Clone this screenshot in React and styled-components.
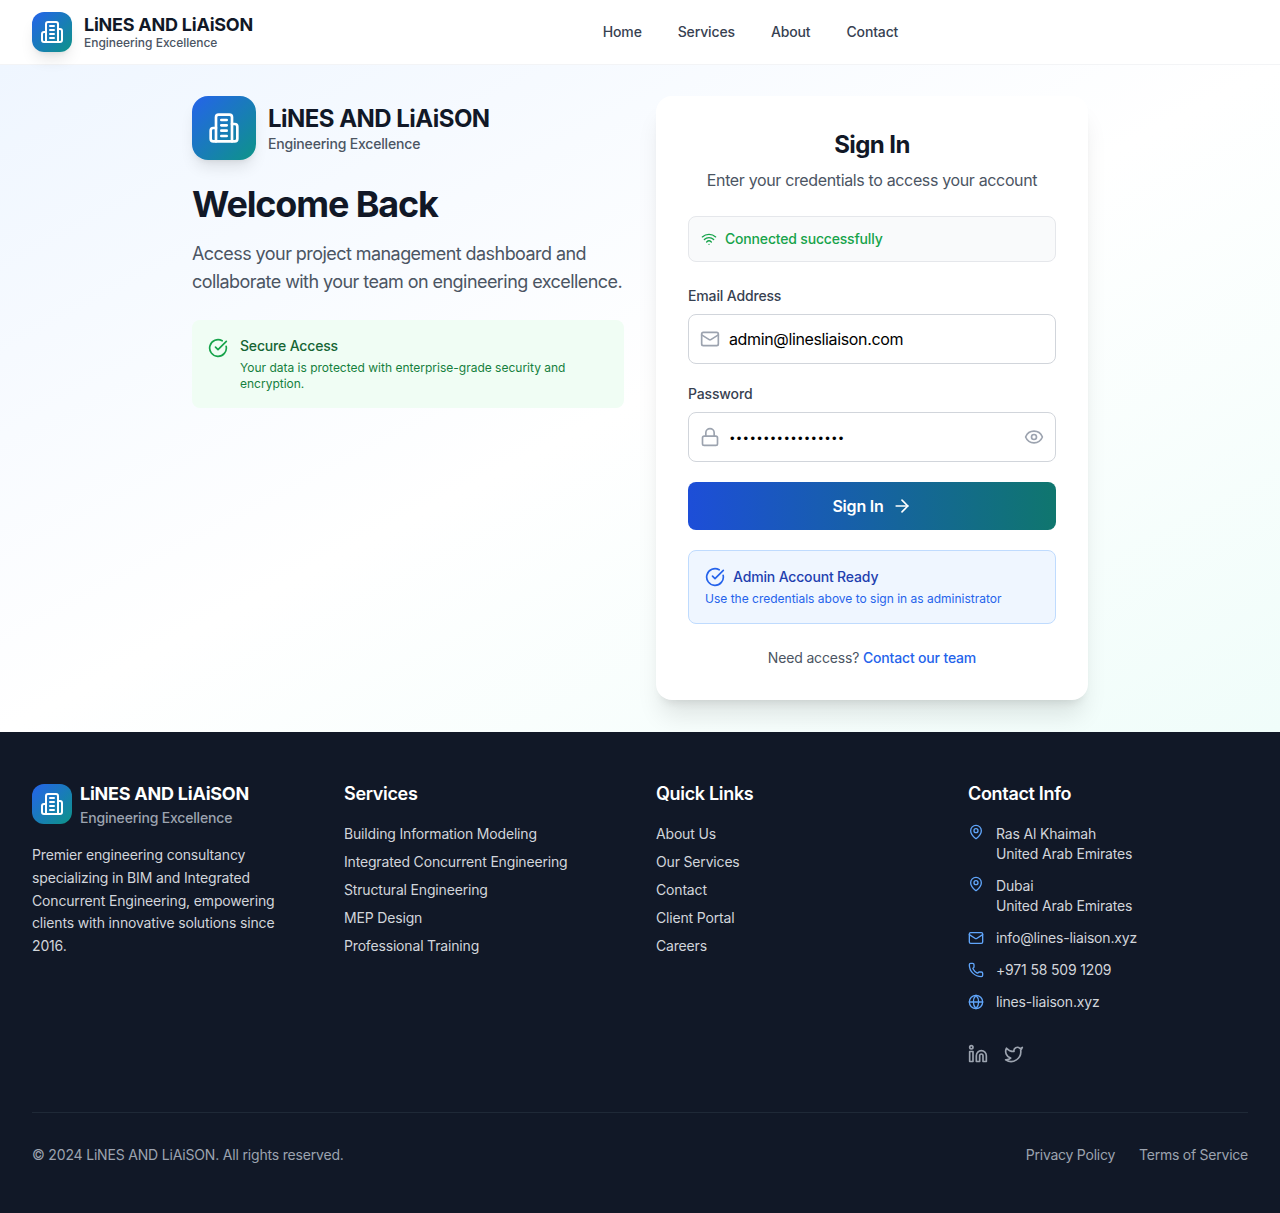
import styled, { createGlobalStyle } from "styled-components";
import {
  ArrowRight,
  CircleCheckBig,
  Eye,
  Globe,
  Linkedin,
  Lock,
  Mail,
  MapPin,
  Phone,
  Twitter,
  Wifi,
} from "lucide-react";

const GlobalStyle = createGlobalStyle`
  * { box-sizing: border-box; }
  body {
    margin: 0;
    font-family: Inter, "Liberation Sans", sans-serif;
    background: #fff;
  }
`;

const Header = styled.header`
  height: 65px;
  padding: 0 32px;
  background: #fff;
  border-bottom: 1px solid #f3f4f6;
  display: flex;
  align-items: center;
  justify-content: space-between;
`;
const Brand = styled.div`
  display: flex;
  align-items: center;
  gap: ${(props) => props.$gap}px;
`;
const LogoBox = styled.div`
  width: ${(props) => props.$size}px;
  height: ${(props) => props.$size}px;
  border-radius: ${(props) => props.$radius}px;
  background: linear-gradient(135deg, #2563eb, #0d9488);
  color: #fff;
  flex-shrink: 0;
  display: flex;
  align-items: center;
  justify-content: center;
  box-shadow: ${(props) =>
    props.$flat
      ? "none"
      : "0 10px 15px -3px rgba(0,0,0,0.1), 0 4px 6px -4px rgba(0,0,0,0.1)"};
`;
const BrandName = styled.div`
  font-size: ${(props) => props.$size}px;
  line-height: ${(props) => props.$line}px;
  letter-spacing: ${(props) => props.$track}px;
  font-weight: 700;
  color: ${(props) => props.$color};
`;
const BrandSub = styled.div`
  font-size: ${(props) => props.$size}px;
  line-height: ${(props) => props.$line}px;
  letter-spacing: ${(props) => props.$track}px;
  font-weight: 500;
  color: ${(props) => props.$color};
`;
const Nav = styled.nav`
  display: flex;
  gap: 36px;
`;
const NavLink = styled.a`
  font-size: 14px;
  line-height: 20px;
  font-weight: 500;
  letter-spacing: -0.14px;
  color: #374151;
`;

const Main = styled.main`
  height: 667px;
  padding: 31px 0 32px;
  background: linear-gradient(to bottom right, #eff6ff 0%, #ffffff 50%, #f0fdfa 100%);
`;
const Columns = styled.div`
  width: 896px;
  margin: 0 auto;
  display: grid;
  grid-template-columns: 432px 432px;
  gap: 32px;
`;
const HeroTitle = styled.h1`
  margin: 24px 0 16px;
  font-size: 36px;
  line-height: 40px;
  font-weight: 700;
  letter-spacing: -1.15px;
  color: #111827;
`;
const HeroText = styled.p`
  margin: 0 0 24px;
  font-size: 18px;
  line-height: 28px;
  letter-spacing: -0.56px;
  color: #4b5563;
`;
const SecureBox = styled.div`
  display: flex;
  gap: 12px;
  padding: 16px;
  border-radius: 8px;
  background: #f0fdf4;
  color: #16a34a;
`;
const SecureIcon = styled.div`
  flex-shrink: 0;
  height: 20px;
  margin-top: 2px;
`;
const SecureTitle = styled.div`
  font-size: 14px;
  line-height: 20px;
  font-weight: 500;
  letter-spacing: -0.17px;
  color: #166534;
`;
const SecureText = styled.div`
  margin-top: 4px;
  font-size: 12px;
  line-height: 16px;
  color: #15803d;
`;

const Card = styled.section`
  height: 604px;
  padding: 33px 32px 32px;
  background: #fff;
  border-radius: 16px;
  box-shadow: 0 20px 25px -5px rgba(0,0,0,0.1), 0 8px 10px -6px rgba(0,0,0,0.1);
`;
const CardTitle = styled.h2`
  margin: 0 0 7px;
  text-align: center;
  font-size: 24px;
  line-height: 32px;
  font-weight: 700;
  letter-spacing: -0.57px;
  color: #111827;
`;
const CardSub = styled.p`
  margin: 0 0 24px;
  text-align: center;
  font-size: 16px;
  line-height: 24px;
  letter-spacing: -0.355px;
  color: #4b5563;
`;
const StatusBar = styled.div`
  height: 46px;
  padding: 0 12px 1px;
  margin-bottom: 24px;
  display: flex;
  align-items: center;
  gap: 8px;
  background: #f9fafb;
  border: 1px solid #e5e7eb;
  border-radius: 8px;
  color: #16a34a;
  font-size: 14px;
  font-weight: 500;
  letter-spacing: -0.18px;
`;
const Field = styled.div`
  margin-bottom: 20px;
`;
const Label = styled.label`
  display: block;
  margin-bottom: 8px;
  font-size: 14px;
  line-height: 20px;
  font-weight: 500;
  letter-spacing: -0.15px;
  color: #374151;
`;
const InputWrap = styled.div`
  position: relative;
  height: 50px;
`;
const Input = styled.input`
  width: 100%;
  height: 100%;
  padding: 0 40px;
  border: 1px solid #d1d5db;
  border-radius: 8px;
  background: #fff;
  outline: none;
  color: #000;
  font-family: inherit;
  font-size: 16px;
  letter-spacing: -0.36px;
`;
const PasswordInput = styled(Input)`
  padding: 2px 40px 0 41px;
  font-family: "Liberation Sans", sans-serif;
  font-size: 13px;
  letter-spacing: 2.25px;
`;
const InputIcon = styled.span`
  position: absolute;
  top: 15px;
  ${(props) => (props.$right ? "right: 12px;" : "left: 12px;")}
  height: 20px;
  color: #9ca3af;
`;
const SubmitButton = styled.button`
  width: 100%;
  height: 48px;
  border: 0;
  border-radius: 8px;
  background: linear-gradient(90deg, #1d4ed8, #0f766e);
  color: #fff;
  font-family: inherit;
  font-size: 16px;
  font-weight: 600;
  letter-spacing: -0.2px;
  display: flex;
  align-items: center;
  justify-content: center;
  gap: 8px;
`;
const AdminBox = styled.div`
  margin-top: 20px;
  height: 74px;
  padding: 16px;
  background: #eff6ff;
  border: 1px solid #bfdbfe;
  border-radius: 8px;
`;
const AdminHead = styled.div`
  display: flex;
  align-items: center;
  gap: 8px;
  color: #2563eb;
  font-size: 14px;
  line-height: 20px;
  font-weight: 500;
  letter-spacing: -0.16px;
`;
const AdminName = styled.span`
  color: #1e40af;
`;
const AdminText = styled.div`
  margin-top: 4px;
  font-size: 12px;
  line-height: 16px;
  color: #2563eb;
`;
const NeedAccess = styled.p`
  margin: 24px 0 0;
  text-align: center;
  font-size: 14px;
  line-height: 20px;
  letter-spacing: -0.17px;
  color: #4b5563;
`;
const AccessLink = styled.a`
  color: #2563eb;
  font-weight: 500;
`;

const Footer = styled.footer`
  height: 481px;
  padding: 48px 32px;
  background: #111827;
`;
const FooterGrid = styled.div`
  display: grid;
  grid-template-columns: repeat(4, 280px);
  gap: 32px;
`;
const FooterText = styled.p`
  margin: 16px 0 0;
  max-width: 270px;
  font-size: 14px;
  line-height: 22.75px;
  letter-spacing: -0.16px;
  color: #d1d5db;
`;
const ColumnTitle = styled.h3`
  margin: 0 0 16px;
  font-size: 18px;
  line-height: 28px;
  font-weight: 600;
  letter-spacing: -0.32px;
  color: #fff;
`;
const LinkList = styled.ul`
  margin: 0;
  padding: 0;
  list-style: none;
  display: flex;
  flex-direction: column;
  gap: 8px;
`;
const LinkItem = styled.li`
  font-size: 14px;
  line-height: 20px;
  letter-spacing: -0.17px;
  color: #d1d5db;
`;
const ContactList = styled.div`
  display: flex;
  flex-direction: column;
  gap: 12px;
`;
const ContactRow = styled.div`
  display: flex;
  align-items: ${(props) => (props.$top ? "flex-start" : "center")};
  gap: 12px;
  font-size: 14px;
  line-height: 20px;
  letter-spacing: -0.17px;
  color: #d1d5db;
`;
const ContactIcon = styled.span`
  flex-shrink: 0;
  height: 16px;
  color: #60a5fa;
`;
const Socials = styled.div`
  display: flex;
  gap: 16px;
  margin-top: 32px;
  color: #9ca3af;
`;
const FooterBottom = styled.div`
  margin-top: 48px;
  padding-top: 32px;
  border-top: 1px solid #1f2937;
  display: flex;
  align-items: center;
  justify-content: space-between;
  font-size: 14px;
  line-height: 20px;
  letter-spacing: -0.18px;
  color: #9ca3af;
`;
const LegalLinks = styled.div`
  display: flex;
  gap: 24px;
  letter-spacing: -0.24px;
`;

const BuildingIcon = ({ size }) => (
  <svg
    width={size}
    height={size}
    viewBox="0 0 24 24"
    fill="none"
    stroke="currentColor"
    strokeWidth="2"
    strokeLinecap="round"
    strokeLinejoin="round"
  >
    <path d="M6 22V4a2 2 0 0 1 2-2h8a2 2 0 0 1 2 2v18Z" />
    <path d="M6 12H4a2 2 0 0 0-2 2v6a2 2 0 0 0 2 2h2" />
    <path d="M18 9h2a2 2 0 0 1 2 2v9a2 2 0 0 1-2 2h-2" />
    <path d="M10 6h4" />
    <path d="M10 10h4" />
    <path d="M10 14h4" />
    <path d="M10 18h4" />
  </svg>
);

const services = [
  "Building Information Modeling",
  "Integrated Concurrent Engineering",
  "Structural Engineering",
  "MEP Design",
  "Professional Training",
];
const quickLinks = ["About Us", "Our Services", "Contact", "Client Portal", "Careers"];

export default function App() {
  return (
    <>
      <GlobalStyle />
      <Header>
        <Brand $gap={12}>
          <LogoBox $size={40} $radius={12}>
            <BuildingIcon size={24} />
          </LogoBox>
          <div>
            <BrandName $size={18} $line={20} $track={-0.235} $color="#111827">
              LiNES AND LiAiSON
            </BrandName>
            <BrandSub $size={12} $line={15} $track={-0.02} $color="#4b5563">
              Engineering Excellence
            </BrandSub>
          </div>
        </Brand>
        <Nav>
          <NavLink>Home</NavLink>
          <NavLink>Services</NavLink>
          <NavLink>About</NavLink>
          <NavLink>Contact</NavLink>
        </Nav>
        <div />
      </Header>

      <Main>
        <Columns>
          <div>
            <Brand $gap={12}>
              <LogoBox $size={64} $radius={16}>
                <BuildingIcon size={32} />
              </LogoBox>
              <div>
                <BrandName $size={24} $line={30} $track={-0.53} $color="#111827">
                  LiNES AND LiAiSON
                </BrandName>
                <BrandSub $size={14} $line={19} $track={-0.18} $color="#4b5563">
                  Engineering Excellence
                </BrandSub>
              </div>
            </Brand>
            <HeroTitle>Welcome Back</HeroTitle>
            <HeroText>
              Access your project management dashboard and collaborate with your
              team on engineering excellence.
            </HeroText>
            <SecureBox>
              <SecureIcon>
                <CircleCheckBig size={20} />
              </SecureIcon>
              <div>
                <SecureTitle>Secure Access</SecureTitle>
                <SecureText>
                  Your data is protected with enterprise-grade security and
                  encryption.
                </SecureText>
              </div>
            </SecureBox>
          </div>

          <Card>
            <CardTitle>Sign In</CardTitle>
            <CardSub>Enter your credentials to access your account</CardSub>
            <StatusBar>
              <Wifi size={16} />
              Connected successfully
            </StatusBar>
            <Field>
              <Label>Email Address</Label>
              <InputWrap>
                <InputIcon>
                  <Mail size={20} />
                </InputIcon>
                <Input type="email" value="admin@linesliaison.com" readOnly />
              </InputWrap>
            </Field>
            <Field>
              <Label>Password</Label>
              <InputWrap>
                <InputIcon>
                  <Lock size={20} />
                </InputIcon>
                <PasswordInput type="password" value="admin123456789012" readOnly />
                <InputIcon $right>
                  <Eye size={20} />
                </InputIcon>
              </InputWrap>
            </Field>
            <SubmitButton>
              Sign In
              <ArrowRight size={20} />
            </SubmitButton>
            <AdminBox>
              <AdminHead>
                <CircleCheckBig size={20} />
                <AdminName>Admin Account Ready</AdminName>
              </AdminHead>
              <AdminText>Use the credentials above to sign in as administrator</AdminText>
            </AdminBox>
            <NeedAccess>
              Need access? <AccessLink>Contact our team</AccessLink>
            </NeedAccess>
          </Card>
        </Columns>
      </Main>

      <Footer>
        <FooterGrid>
          <div>
            <Brand $gap={8}>
              <LogoBox $size={40} $radius={12} $flat>
                <BuildingIcon size={24} />
              </LogoBox>
              <div>
                <BrandName $size={18} $line={28} $track={-0.235} $color="#ffffff">
                  LiNES AND LiAiSON
                </BrandName>
                <BrandSub $size={14} $line={20} $track={-0.18} $color="#9ca3af">
                  Engineering Excellence
                </BrandSub>
              </div>
            </Brand>
            <FooterText>
              Premier engineering consultancy specializing in BIM and Integrated
              Concurrent Engineering, empowering clients with innovative solutions
              since 2016.
            </FooterText>
          </div>
          <div>
            <ColumnTitle>Services</ColumnTitle>
            <LinkList>
              {services.map((item) => (
                <LinkItem key={item}>{item}</LinkItem>
              ))}
            </LinkList>
          </div>
          <div>
            <ColumnTitle>Quick Links</ColumnTitle>
            <LinkList>
              {quickLinks.map((item) => (
                <LinkItem key={item}>{item}</LinkItem>
              ))}
            </LinkList>
          </div>
          <div>
            <ColumnTitle>Contact Info</ColumnTitle>
            <ContactList>
              <ContactRow $top>
                <ContactIcon>
                  <MapPin size={16} />
                </ContactIcon>
                <div>
                  Ras Al Khaimah
                  <br />
                  United Arab Emirates
                </div>
              </ContactRow>
              <ContactRow $top>
                <ContactIcon>
                  <MapPin size={16} />
                </ContactIcon>
                <div>
                  Dubai
                  <br />
                  United Arab Emirates
                </div>
              </ContactRow>
              <ContactRow>
                <ContactIcon>
                  <Mail size={16} />
                </ContactIcon>
                info@lines-liaison.xyz
              </ContactRow>
              <ContactRow>
                <ContactIcon>
                  <Phone size={16} />
                </ContactIcon>
                +971 58 509 1209
              </ContactRow>
              <ContactRow>
                <ContactIcon>
                  <Globe size={16} />
                </ContactIcon>
                lines-liaison.xyz
              </ContactRow>
            </ContactList>
            <Socials>
              <Linkedin size={20} />
              <Twitter size={20} />
            </Socials>
          </div>
        </FooterGrid>
        <FooterBottom>
          <span>© 2024 LiNES AND LiAiSON. All rights reserved.</span>
          <LegalLinks>
            <span>Privacy Policy</span>
            <span>Terms of Service</span>
          </LegalLinks>
        </FooterBottom>
      </Footer>
    </>
  );
}
